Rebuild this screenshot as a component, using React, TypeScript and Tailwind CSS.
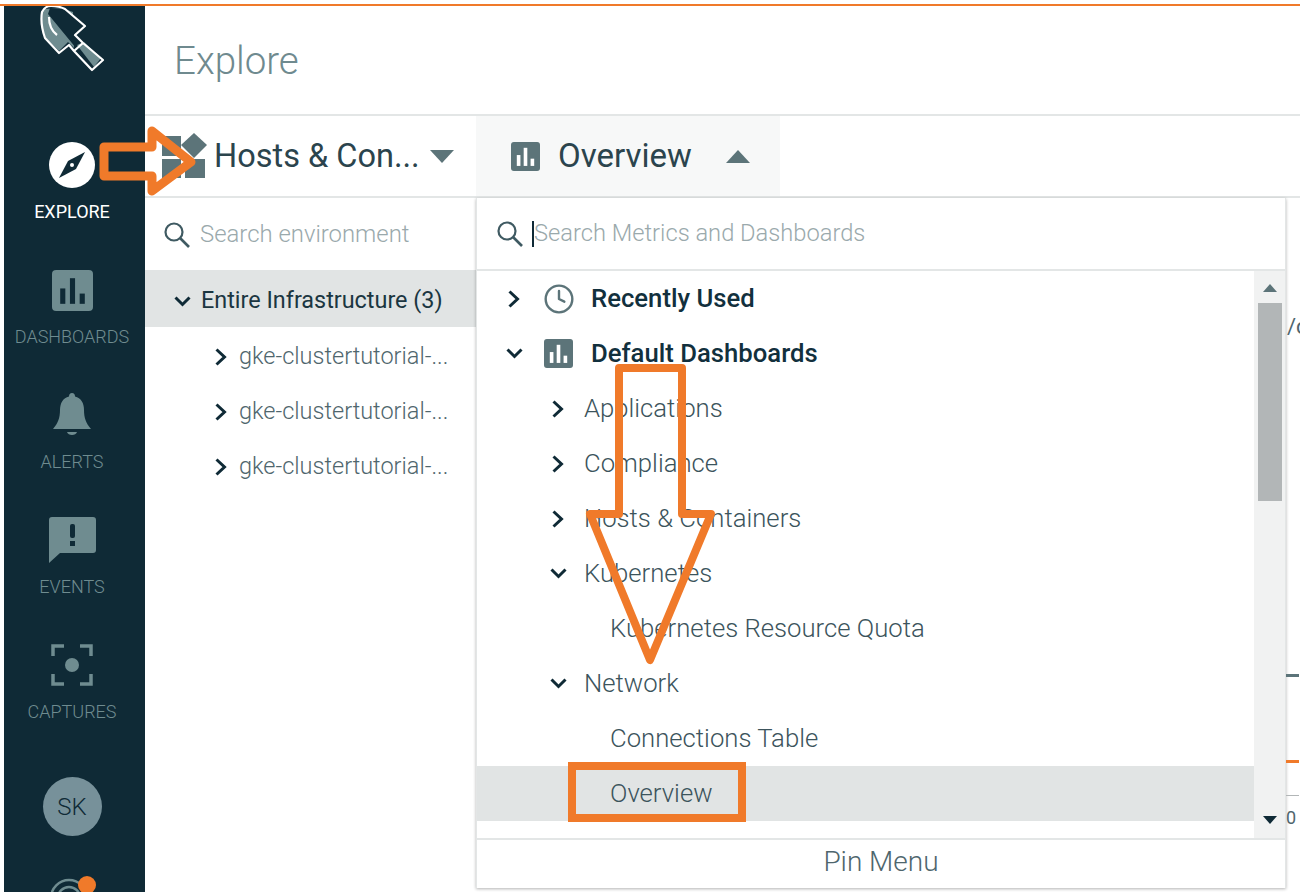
// App.tsx
import { Clock } from "lucide-react";
import type { ReactNode } from "react";

function BarsIcon({ className, bg, bars }: { className: string; bg: string; bars: string }) {
  return (
    <svg viewBox="0 0 40 40" className={className}>
      <rect x="0" y="0" width="40" height="40" rx="4" fill={bg} />
      <rect x="8" y="18" width="5" height="15" fill={bars} />
      <rect x="17.5" y="8" width="5" height="25" fill={bars} />
      <rect x="27" y="23" width="5" height="10" fill={bars} />
    </svg>
  );
}

function SearchGlyph() {
  return (
    <svg viewBox="0 0 26 26" className="w-[26px] h-[26px] shrink-0">
      <circle cx="10" cy="10" r="8.5" fill="none" stroke="#3f5a62" strokeWidth="2.2" />
      <path d="M16 16 L25 25" fill="none" stroke="#3f5a62" strokeWidth="2.6" />
    </svg>
  );
}

function Chevron({ open }: { open?: boolean }) {
  return (
    <div className="w-[24px] h-[24px] flex items-center justify-center shrink-0">
      {open ? (
        <svg viewBox="0 0 17 11" className="w-[17px] h-[11px]">
          <path d="M1.5 1.5 L8.5 8.5 L15.5 1.5" fill="none" stroke="#0f2a36" strokeWidth="3" />
        </svg>
      ) : (
        <svg viewBox="0 0 12 18" className="w-[12px] h-[18px]">
          <path d="M1.5 1.5 L9.5 9 L1.5 16.5" fill="none" stroke="#0f2a36" strokeWidth="3" />
        </svg>
      )}
    </div>
  );
}

function Logo() {
  return (
    <svg viewBox="0 2 70 70" className="w-[70px] h-[70px]">
      <path d="M6 5 L4 20 L8 33 L22 47 L31 38 L37 44 L36 8 L24 4 Z" fill="#6f8c90" />
      <path d="M13 4 L29 5 L47 21 L38 31 L45 39 L39 44 L11 10 Z" fill="#0f2a36" />
      <path d="M40 41 L47 38 L64 54 L57 63 Z" fill="#6f8c90" />
      <path
        d="M5 8 Q8 2 14 2 Q22 2 28 5 L48 22 L38 31 L46 39 L66 56 L55 66 L37 47 L32 41 L22 49 L8 34 Q3 20 5 8 Z M46 39 L37 47"
        fill="none"
        stroke="#ffffff"
        strokeWidth="2.2"
        strokeLinejoin="round"
      />
      <path d="M12 13 Q12 25 20 31" fill="none" stroke="#ffffff" strokeWidth="2.2" />
    </svg>
  );
}

function Compass() {
  return (
    <div className="w-[46px] h-[46px] rounded-full bg-white flex items-center justify-center">
      <svg viewBox="0 0 32 32" className="w-[32px] h-[32px]">
        <path d="M29 3 L20 20 L3 29 L12 12 Z" fill="#0f2a36" />
        <circle cx="16" cy="16" r="2" fill="#ffffff" />
      </svg>
    </div>
  );
}

function Bell() {
  return (
    <svg viewBox="0 0 38 44" className="w-[38px] h-[44px]">
      <path
        d="M19 0 C21 0 22 1.5 22 3.5 C28 5 31 10 31 17 C31 25 33 30 38 36 L0 36 C5 30 7 25 7 17 C7 10 10 5 16 3.5 C16 1.5 17 0 19 0 Z"
        fill="#6f8c90"
      />
      <path d="M14 39 L24 39 C23 43 15 43 14 39 Z" fill="#6f8c90" />
    </svg>
  );
}

function Bubble() {
  return (
    <svg viewBox="0 0 47 46" className="w-[47px] h-[46px]">
      <path d="M3 0 L44 0 Q47 0 47 3 L47 33 Q47 36 44 36 L11 36 L0 46 L0 3 Q0 0 3 0 Z" fill="#6f8c90" />
      <rect x="21" y="7" width="5" height="14" rx="2" fill="#0f2a36" />
      <rect x="21" y="24" width="5" height="5" fill="#0f2a36" />
    </svg>
  );
}

function CaptureIcon() {
  return (
    <svg viewBox="0 0 42 42" className="w-[42px] h-[42px]">
      <path
        d="M13 2 L2 2 L2 12 M29 2 L40 2 L40 12 M2 30 L2 40 L13 40 M40 30 L40 40 L29 40"
        fill="none"
        stroke="#6f8c90"
        strokeWidth="3.5"
      />
      <circle cx="21" cy="21" r="7" fill="#6f8c90" />
    </svg>
  );
}

function NavItem({ icon, label, active }: { icon: ReactNode; label: string; active?: boolean }) {
  return (
    <div className="h-[125px] flex flex-col items-center shrink-0">
      <div className="h-[46px] flex items-center justify-center">{icon}</div>
      <span className={`mt-[14px] text-[18px] leading-[20px] ${active ? "text-white font-normal" : "text-[#6f8c90] font-light"}`}>
        {label}
      </span>
    </div>
  );
}

function Sidebar() {
  return (
    <aside className="w-[141px] h-[886px] bg-[#0f2a36] shrink-0 flex flex-col items-stretch overflow-hidden pr-[5px]">
      <div className="h-[136px] pl-[33px] shrink-0">
        <Logo />
      </div>
      <NavItem icon={<Compass />} label="EXPLORE" active />
      <NavItem icon={<BarsIcon className="w-[41px] h-[41px]" bg="#6f8c90" bars="#0f2a36" />} label="DASHBOARDS" />
      <NavItem icon={<Bell />} label="ALERTS" />
      <NavItem icon={<Bubble />} label="EVENTS" />
      <NavItem icon={<CaptureIcon />} label="CAPTURES" />
      <div className="flex justify-center shrink-0 pt-[10px]">
        <div className="w-[59px] h-[59px] rounded-full bg-[#77919a] text-[#0f2a36] text-[24px] font-light flex items-center justify-center">
          SK
        </div>
      </div>
      <div className="relative flex-1">
        <svg viewBox="0 0 50 20" className="absolute left-[47px] top-[42px] w-[50px] h-[20px]">
          <circle cx="18" cy="20" r="18" fill="none" stroke="#6f8c90" strokeWidth="2.5" />
          <circle cx="18" cy="20" r="11" fill="none" stroke="#6f8c90" strokeWidth="2.5" />
          <circle cx="18" cy="20" r="4" fill="none" stroke="#6f8c90" strokeWidth="2.5" />
        </svg>
        <div className="absolute left-[74px] top-[40px] w-[18px] h-[18px] rounded-full bg-[#f07a2a]" />
      </div>
    </aside>
  );
}

function HostsIcon() {
  return (
    <svg viewBox="0 0 46 46" className="w-[46px] h-[46px] shrink-0">
      <rect x="1" y="3" width="19" height="20" fill="#5c7479" />
      <rect x="1" y="26" width="19" height="19" fill="#5c7479" />
      <rect x="24" y="26" width="20" height="19" fill="#5c7479" />
      <path d="M33 0 L46 12 L33 25 L20 12 Z" fill="#5c7479" />
    </svg>
  );
}

function EnvRow({ label }: { label: string }) {
  return (
    <div className="h-[55px] flex items-center pl-[64px] pt-[5px]">
      <Chevron />
      <span className="ml-[6px] text-[23.5px] text-[#4f666d] whitespace-nowrap font-light">{label}</span>
    </div>
  );
}

function EnvPane() {
  return (
    <div className="w-[331px] shrink-0">
      <div className="h-[72px] flex items-center pl-[19px] pt-[1px]">
        <SearchGlyph />
        <span className="ml-[10px] text-[23.9px] text-[#9aa9ac] font-light whitespace-nowrap">Search environment</span>
      </div>
      <div className="h-[57px] bg-[#e1e4e4] flex items-center pl-[25px] pt-[5px]">
        <Chevron open />
        <span className="ml-[7px] text-[23.4px] text-[#1b3641] whitespace-nowrap">Entire Infrastructure (3)</span>
      </div>
      <EnvRow label="gke-clustertutorial-..." />
      <EnvRow label="gke-clustertutorial-..." />
      <EnvRow label="gke-clustertutorial-..." />
    </div>
  );
}

function TreeRow({
  label,
  indent,
  open,
  selected,
}: {
  label: string;
  indent: "mid" | "leaf";
  open?: boolean;
  selected?: boolean;
}) {
  return (
    <div className={`h-[55px] flex items-center shrink-0 ${selected ? "bg-[#e1e4e4]" : ""}`}>
      {indent === "mid" ? (
        <div className="w-[107px] pl-[69px] shrink-0">
          <Chevron open={open} />
        </div>
      ) : (
        <div className="w-[133px] shrink-0" />
      )}
      <span className="text-[25.7px] text-[#3c545c] font-light whitespace-nowrap">{label}</span>
    </div>
  );
}

function Dropdown() {
  return (
    <div className="w-[810px] h-[690px] shrink-0 border-x border-[#e3e6e6] shadow-[0_1px_3px_rgba(0,0,0,0.3)] flex flex-col bg-white">
      <div className="h-[73px] flex items-center pl-[20px] pt-[1px] border-b-2 border-[#e3e6e6] shrink-0">
        <SearchGlyph />
        <div className="w-[2px] h-[26px] bg-[#0f2a36] ml-[9px] shrink-0" />
        <span className="text-[23.7px] text-[#9aa9ac] font-light whitespace-nowrap">Search Metrics and Dashboards</span>
      </div>
      <div className="flex h-[567px] shrink-0">
        <div className="flex-1 flex flex-col">
          <div className="h-[55px] flex items-center pl-[25px] shrink-0">
            <Chevron />
            <Clock className="w-[32px] h-[32px] text-[#5c7479] ml-[17px] shrink-0" strokeWidth={1.8} />
            <span className="ml-[16px] text-[25.7px] font-medium text-[#12303d] whitespace-nowrap">Recently Used</span>
          </div>
          <div className="h-[55px] flex items-center pl-[25px] shrink-0">
            <Chevron open />
            <BarsIcon className="w-[29px] h-[29px] ml-[18px] shrink-0" bg="#5c7479" bars="#ffffff" />
            <span className="ml-[18px] text-[25.7px] font-medium text-[#12303d] whitespace-nowrap">Default Dashboards</span>
          </div>
          <TreeRow indent="mid" label="Applications" />
          <TreeRow indent="mid" label="Compliance" />
          <TreeRow indent="mid" label="Hosts & Containers" />
          <TreeRow indent="mid" label="Kubernetes" open />
          <TreeRow indent="leaf" label="Kubernetes Resource Quota" />
          <TreeRow indent="mid" label="Network" open />
          <TreeRow indent="leaf" label="Connections Table" />
          <TreeRow indent="leaf" label="Overview" selected />
        </div>
        <div className="w-[31px] bg-[#f1f2f2] shrink-0 flex flex-col items-center pt-[13px]">
          <div className="w-0 h-0 border-x-[7px] border-x-transparent border-b-[8px] border-b-[#5c7479]" />
          <div className="w-[24px] h-[198px] bg-[#b2b6b7] mt-[11px]" />
          <div className="w-0 h-0 border-x-[7px] border-x-transparent border-t-[8px] border-t-[#0f2a36] mt-[315px]" />
        </div>
      </div>
      <div className="flex-1 border-t-2 border-[#e3e6e6] flex items-center justify-center pb-[4px] text-[28px] font-light text-[#4f666d]">
        Pin Menu
      </div>
    </div>
  );
}

export default function App() {
  return (
    <div className="relative w-[1300px] h-[896px] bg-white overflow-hidden font-['Roboto',sans-serif]">
      <div className="h-1" />
      <div className="h-[2px] bg-[#f07a2a]" />
      <div className="flex pl-1">
        <Sidebar />
        <main className="flex-1 min-w-0">
          <header className="h-[110px] border-b-2 border-[#e3e6e6] flex items-center pl-[29px] pt-[2px]">
            <h1 className="text-[38.5px] font-light text-[#6f8a8f]">Explore</h1>
          </header>
          <div className="h-[82px] flex border-b-2 border-[#e3e6e6]">
            <div className="w-[331px] flex items-center pl-[16px] shrink-0">
              <HostsIcon />
              <span className="ml-[7px] text-[32.5px] text-[#2b444d] whitespace-nowrap">Hosts & Con...</span>
              <div className="ml-[10px] w-0 h-0 border-x-[12px] border-x-transparent border-t-[13px] border-t-[#5c7479]" />
            </div>
            <div className="w-[304px] flex items-center pl-[35px] bg-[#f7f8f8] shrink-0">
              <BarsIcon className="w-[29px] h-[29px] shrink-0" bg="#5c7479" bars="#ffffff" />
              <span className="ml-[18px] text-[33px] text-[#2b444d] whitespace-nowrap">Overview</span>
              <div className="ml-[34px] w-0 h-0 border-x-[12px] border-x-transparent border-b-[13px] border-b-[#5c7479]" />
            </div>
          </div>
          <div className="flex">
            <EnvPane />
            <Dropdown />
            <div className="flex-1 min-w-0 overflow-hidden text-[#4f666d] text-[22px]">
              <div className="mt-[112px] whitespace-nowrap pl-[1px]">/c</div>
              <div className="mt-[331px] w-[13px] h-[3px] bg-[#5c7479]" />
              <div className="mt-[83px] w-[13px] h-[3px] bg-[#f07a2a]" />
              <div className="mt-[32px] w-[13px] h-px bg-[#b2b6b7]" />
              <div className="mt-[8px] whitespace-nowrap text-[18px]">0</div>
            </div>
          </div>
        </main>
      </div>

      {/* orange annotations drawn on top of the shot */}
      <svg className="absolute inset-0 w-[1300px] h-[896px] pointer-events-none" viewBox="0 0 1300 896">
        <path
          d="M104 147 L152 147 L152 131 L191 162 L152 191 L152 176 L104 176 Z"
          fill="none"
          stroke="#f07a2a"
          strokeWidth="9"
          strokeLinejoin="round"
        />
        <path
          d="M619 368 L682 368 L682 514 L711 514 L650 660 L590 514 L619 514 Z"
          fill="none"
          stroke="#f07a2a"
          strokeWidth="8"
          strokeLinejoin="round"
        />
      </svg>
      <div className="absolute left-[568px] top-[762px] w-[178px] h-[60px] border-[8px] border-[#f07a2a]" />
    </div>
  );
}
